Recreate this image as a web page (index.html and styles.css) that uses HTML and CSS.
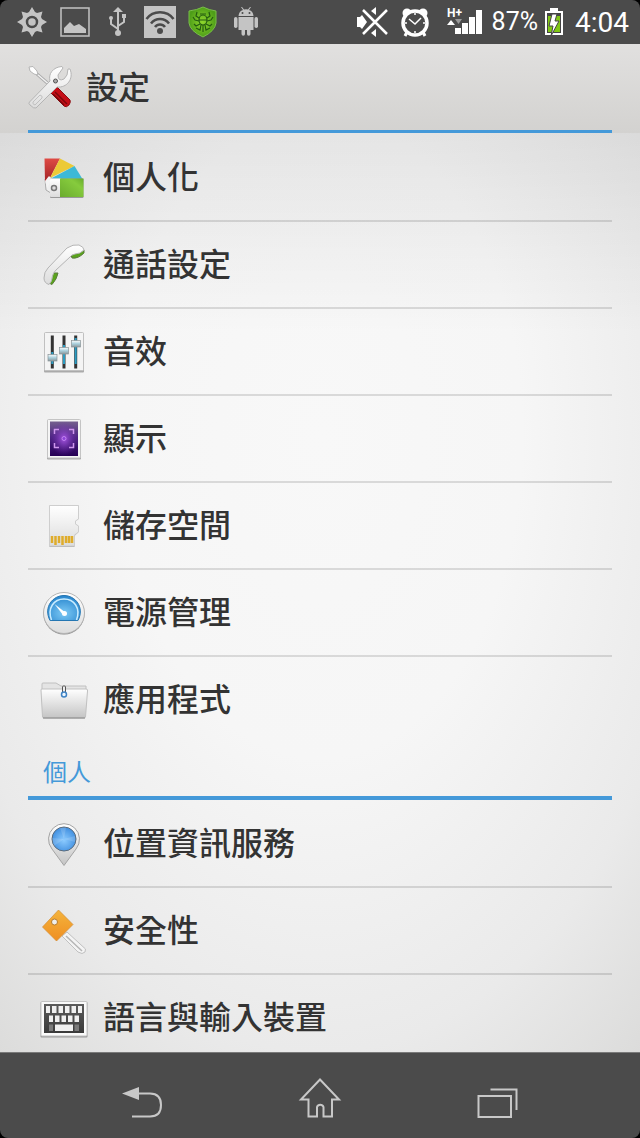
FILE: index.html
```html
<!DOCTYPE html>
<html lang="zh-Hant">
<head>
    <meta charset="UTF-8">
    <meta name="viewport" content="width=device-width, initial-scale=1.0">
    <title>設定</title>
    <link rel="stylesheet" href="styles.css">
</head>
<body>
    <!-- shared gradients -->
    <svg class="defs" width="0" height="0" aria-hidden="true">
        <defs>
            <linearGradient id="metal" x1="0" y1="0" x2="0" y2="1">
                <stop offset="0" stop-color="#ffffff"/>
                <stop offset="1" stop-color="#dcdcdc"/>
            </linearGradient>
            <linearGradient id="front" x1="0" y1="0" x2="0" y2="1">
                <stop offset="0" stop-color="#ffffff"/>
                <stop offset="1" stop-color="#c4c4c4"/>
            </linearGradient>
            <linearGradient id="red" x1="0" y1="0" x2="0" y2="1">
                <stop offset="0" stop-color="#df4b45"/>
                <stop offset="1" stop-color="#a02125"/>
            </linearGradient>
            <linearGradient id="green" x1="1" y1="0" x2="0" y2="1">
                <stop offset="0" stop-color="#68ad2c"/>
                <stop offset="0.3" stop-color="#86cb3d"/>
                <stop offset="1" stop-color="#6aab2e"/>
            </linearGradient>
            <linearGradient id="gold" x1="0" y1="0" x2="0" y2="1">
                <stop offset="0" stop-color="#f4b43c"/>
                <stop offset="1" stop-color="#ef8e22"/>
            </linearGradient>
            <linearGradient id="keys" x1="0" y1="0" x2="0" y2="1">
                <stop offset="0" stop-color="#5c5c5c"/>
                <stop offset="1" stop-color="#3a3a3a"/>
            </linearGradient>
            <linearGradient id="knob" x1="0" y1="0" x2="0" y2="1">
                <stop offset="0" stop-color="#ffffff"/>
                <stop offset="0.5" stop-color="#a8cfdc"/>
                <stop offset="1" stop-color="#8e989c"/>
            </linearGradient>
            <radialGradient id="blue" cx="0.5" cy="0.7" r="0.7">
                <stop offset="0" stop-color="#7cc9f5"/>
                <stop offset="1" stop-color="#2583cc"/>
            </radialGradient>
            <radialGradient id="pin" cx="0.5" cy="0.55" r="0.6">
                <stop offset="0" stop-color="#8ccbff"/>
                <stop offset="1" stop-color="#3888dc"/>
            </radialGradient>
            <linearGradient id="purpleBase" x1="0" y1="0" x2="0" y2="1">
                <stop offset="0" stop-color="#75608f"/>
                <stop offset="0.45" stop-color="#4d2483"/>
                <stop offset="1" stop-color="#260055"/>
            </linearGradient>
            <radialGradient id="purple">
                <stop offset="0" stop-color="#a455e0"/>
                <stop offset="1" stop-color="#6a28a8" stop-opacity="0"/>
            </radialGradient>
            <radialGradient id="shield">
                <stop offset="0" stop-color="#8ed62c"/>
                <stop offset="1" stop-color="#4e9e18"/>
            </radialGradient>
        </defs>
    </svg>

    <div class="phone">
        <div class="status-bar">
            <div class="notifications">
                <svg viewBox="0 0 32 32" fill="#c4c4c4">
                    <path d="M16 1 L19 6 Q20 6.500 21 7 L26.500 5.500 L25 11 Q25.500 12 26 13 L31 16 L26 19 Q25.500 20 25 21 L26.500 26.500 L21 25 Q20 25.500 19 26 L16 31 L13 26 Q12 25.500 11 25 L5.500 26.500 L7 21 Q6.500 20 6 19 L1 16 L6 13 Q6.500 12 7 11 L5.500 5.500 L11 7 Q12 6.500 13 6 Z"/>
                    <circle cx="16" cy="16" r="5" fill="none" stroke="#4b4b4b" stroke-width="2.500"/>
                </svg>
                <svg viewBox="0 0 32 32">
                    <rect x="2" y="2" width="28" height="28" fill="none" stroke="#c4c4c4" stroke-width="1.500"/>
                    <path d="M5 27 V22 L11 16 L15 20 L20 18 L27 23 V27 Z" fill="#c4c4c4"/>
                </svg>
                <svg viewBox="0 0 32 32" fill="none" stroke="#c4c4c4" stroke-width="2">
                    <path d="M16 4 V27 M16 23 L9 18 V12 M16 20 L22 16 V11"/>
                    <path d="M16 1 L21 6 H11 Z" fill="#c4c4c4" stroke="none"/>
                    <circle cx="16" cy="27" r="3" fill="#c4c4c4" stroke="none"/>
                    <circle cx="9" cy="12" r="2" fill="#c4c4c4" stroke="none"/>
                    <rect x="20" y="8" width="4" height="4" fill="#c4c4c4" stroke="none"/>
                </svg>
                <svg viewBox="0 0 32 32">
                    <rect width="32" height="32" fill="#c4c4c4"/>
                    <g fill="none" stroke="#4b4b4b" stroke-width="2.500">
                        <path d="M2.500 13 C9 4 23 4 29.500 13"/>
                        <path d="M7 17.500 C11.500 11.500 20.500 11.500 25 17.500"/>
                        <path d="M11 21 C13.500 17.500 18.500 17.500 21 21"/>
                    </g>
                    <circle cx="16" cy="25" r="3" fill="#4b4b4b"/>
                </svg>
                <svg viewBox="0 0 32 32">
                    <path d="M16 1 Q22 4 29 5 V17 Q28 25 16 31 Q3 25 2 17 V5 Q10 4 16 1 Z" fill="url(#shield)" stroke="#79be49"/>
                    <g fill="none" stroke="#245c10" stroke-width="1.200">
                        <ellipse cx="16" cy="14" rx="4" ry="5"/>
                        <path d="M12 12 L9 10 L10 6 M20 12 L23 10 L22 6 M12 15 L8 14 L6 11 M20 15 L24 14 L26 11 M13 18 L9 20 L7 18 M19 18 L23 20 L25 18 M14 19 L13 24 L9 22 M18 19 L19 24 L23 22 M13 8 L19 8 M12 14 H20 M16 19 V26"/>
                    </g>
                </svg>
                <svg viewBox="0 0 32 32" fill="#c4c4c4">
                    <path d="M8.500 10 Q9 5 13 4 L11 1 L12 1 L14 3.500 Q16 3 18 3.500 L20 1 L21 1 L19 4 Q23 5 23.500 10 Z"/>
                    <path d="M8.500 11 H23.500 V24 H20.500 V28 A1.500 1.500 0 0 1 17 28 V24 H15 V28 A1.500 1.500 0 0 1 11.500 28 V24 H8.500 Z"/>
                    <rect x="4" y="11" width="3.500" height="11" rx="1.700"/>
                    <rect x="24.500" y="11" width="3.500" height="11" rx="1.700"/>
                    <circle cx="12.500" cy="7" r="1" fill="#4b4b4b"/>
                    <circle cx="19.500" cy="7" r="1" fill="#4b4b4b"/>
                </svg>
            </div>
            <div class="system">
                <svg class="mute" viewBox="0 0 32 32" fill="#fff">
                    <path d="M0 11 H3 L5 9 L10 16 L5 23 L3 21 H0 Z M14 5 L19 1 V9 Z M14 27 L19 31 V23 Z"/>
                    <path d="M6 4 L30 28 M30 4 L6 28" stroke="#fff" stroke-width="2.500"/>
                </svg>
                <svg class="alarm" viewBox="0 0 28 32" fill="#fff">
                    <circle cx="6" cy="7" r="4.500"/>
                    <circle cx="22" cy="7" r="4.500"/>
                    <path d="M6 26 L4 30 M22 26 L24 30" stroke="#fff" stroke-width="3"/>
                    <circle cx="14" cy="17" r="12" fill="#4b4b4b" stroke="#fff" stroke-width="3.500"/>
                    <path d="M8 13 L14 18 L20 12 M14 7 V9 M14 25 V27 M4 17 H6 M22 17 H24" fill="none" stroke="#fff" stroke-width="1.500"/>
                </svg>
                <svg class="signal" viewBox="0 0 36 32" fill="#fff">
                    <text x="0" y="11" class="network">H+</text>
                    <path d="M0 19 L4 14 L8 19 Z"/>
                    <path d="M8 13 H15 L11.500 18 Z" fill="#999"/>
                    <path d="M8 22 H14 V28 H8 Z M15 17 H21 V28 H15 Z M22 11 H28 V28 H22 Z M29 4 H35 V28 H29 Z"/>
                </svg>
                <span class="percent">87%</span>
                <svg class="battery" viewBox="0 0 18 32">
                    <rect x="5" y="2" width="8" height="4" fill="#fff"/>
                    <rect x="1" y="6" width="16" height="22" fill="#444" stroke="#fff" stroke-width="2"/>
                    <rect x="3" y="10" width="12" height="16" fill="#80c814"/>
                    <path d="M7 8 H12 L10 15 H14 L6 30 L8 20 H4 Z" fill="#fff" stroke="#444"/>
                </svg>
                <span class="clock">4:04</span>
            </div>
        </div>

        <header class="title-bar">
            <div class="title-inner">
                <svg class="title-icon" viewBox="0 0 44 44">
                    <path d="M9 9 L24 22" stroke="#a9a9a9" stroke-width="3"/>
                    <path d="M9 9 L24 22" stroke="#f1f1f1" stroke-width="1.500"/>
                    <path d="M1 2 L5 1.500 L9 6 L10 10 L6 9 L2 6 Z" fill="#fff" stroke="#b5b5b5"/>
                    <path d="M23 28 L29 22 L42 35 Q43 37 41 40 Q38 43 36 41 Z" fill="#c50d16" stroke="#8b0c10"/>
                    <path d="M27 27 L39 39 M25 29 L36 40" stroke="#7c080c" stroke-width="1.500"/>
                    <path d="M1.500 37 L22 16 C20 9 25 2 34 1.500 L35 3 L30 10 Q30 17 36 14 Q40 11 40 4 L42 4 C46 14 39 23 29 22 L8 43 Q6 44 2 40 Q0 38 1.500 37 Z" fill="url(#metal)" stroke="#b4b4b4"/>
                    <path d="M5 37 L12 30 Q15 31 14 33 L7 40 Q4 39 5 37 Z" fill="none" stroke="#c0c0c0"/>
                    <circle cx="27.500" cy="16" r="2" fill="#aaa" stroke="#555"/>
                </svg>
                <h1>設定</h1>
            </div>
        </header>

        <main class="settings">
            <ul class="list">
                <li><a href="#personalize">
                    <svg class="icon" viewBox="0 0 48 48">
                        <path d="M5 25 L11 22 L14 41 L6 36 Z" fill="#eee" stroke="#aaa"/>
                        <path d="M4.500 4.500 H20 L10 24 L5 28 Z" fill="url(#red)"/>
                        <path d="M20 4.500 L34.500 12 L10 24 Z" fill="#ecca37"/>
                        <path d="M34.500 12 L42.500 25 H10 Z" fill="#3db9d6"/>
                        <path d="M5 27 L9 22 L12 25 L7 34 Z" fill="#f3f3f3"/>
                        <rect x="10" y="24.500" width="33.500" height="19.500" rx="1" fill="#999"/>
                        <rect x="10" y="24.500" width="11" height="18.500" rx="1" fill="url(#metal)"/>
                        <rect x="20" y="24.500" width="23.500" height="18.500" fill="url(#green)"/>
                        <circle cx="14" cy="34" r="2.500" fill="#ddd" stroke="#777" stroke-width="1.500"/>
                    </svg>
                    <span>個人化</span>
                </a></li>
                <li><a href="#call">
                    <svg class="icon" viewBox="0 0 48 48">
                        <path d="M31 14 L44 9 L44 12 Q38 18 32 17 Z" fill="#5aa31c" stroke="#5c7c40"/>
                        <path d="M11 32 L18 32 Q17 38 12 43.500 L9 42 Z" fill="#5aa31c" stroke="#5c7c40"/>
                        <path d="M27 7 Q33 3 39 4 Q44 6 44 9 Q40 13 35 13 Q31 14 30 16 L16 29 Q13 32 12.500 35 Q12 41 9 43.500 Q4 42 4 37 Q4 31 8 27 Z" fill="url(#metal)" stroke="#b4b4b4"/>
                    </svg>
                    <span>通話設定</span>
                </a></li>
                <li><a href="#sound">
                    <svg class="icon" viewBox="0 0 48 48">
                        <rect x="4" y="5" width="40" height="39.500" rx="1" fill="#aaa"/>
                        <rect x="4.500" y="4.500" width="39" height="38" rx="1" fill="#f4f4f4" stroke="#c0c0c0"/>
                        <path d="M12.300 7.500 V40.500 M24 7.500 V40.500 M35.700 7.500 V40.500" stroke="#333" stroke-width="3"/>
                        <path d="M12.300 24 V36 M24 17 V36 M35.700 10 V36" stroke="#2c9cc2" stroke-width="2"/>
                        <g fill="url(#knob)" stroke="#8a9498" stroke-width="0.700">
                            <rect x="8" y="26.500" width="9" height="6.500"/>
                            <rect x="19.500" y="19.500" width="9" height="6.500"/>
                            <rect x="31.500" y="12.500" width="9" height="6.500"/>
                        </g>
                    </svg>
                    <span>音效</span>
                </a></li>
                <li><a href="#display">
                    <svg class="icon" viewBox="0 0 48 48">
                        <rect x="7" y="5" width="34" height="39.500" rx="1" fill="#aaa"/>
                        <rect x="7.500" y="4.500" width="33" height="38.500" rx="1" fill="#f5f5f5" stroke="#c4c4c4"/>
                        <rect x="10" y="6.500" width="28" height="34.500" fill="url(#purpleBase)"/>
                        <rect x="10" y="6.500" width="28" height="34.500" fill="url(#purple)"/>
                        <path d="M14.500 19 V14.500 H19 M29 14.500 H33.500 V19 M33.500 28 V32.500 H29 M19 32.500 H14.500 V28" fill="none" stroke="#cf96ee" stroke-width="1.500"/>
                        <circle cx="24" cy="23.500" r="2" fill="#8d42d8" stroke="#c384f0"/>
                    </svg>
                    <span>顯示</span>
                </a></li>
                <li><a href="#storage">
                    <svg class="icon" viewBox="0 0 48 48">
                        <path d="M9.500 3.500 H38.500 V17 L35.500 19 V22 L38.500 24 V30 L34.500 34 V45 H9.500 Z" fill="#aaa"/>
                        <path d="M9.500 3.500 H38.500 V17 L35.500 19 V22 L38.500 24 V30 L34.500 33 V44 H9.500 Z" fill="url(#metal)" stroke="#cecece"/>
                        <path d="M12 34 V41 M15.500 34 V43 M19 34 V41 M22.500 34 V43 M26 34 V41 M29 34 V41 M32 34 V41" stroke="#dfac2b" stroke-width="2.500"/>
                    </svg>
                    <span>儲存空間</span>
                </a></li>
                <li><a href="#power">
                    <svg class="icon" viewBox="0 0 48 48">
                        <circle cx="24" cy="25" r="20.500" fill="#888"/>
                        <circle cx="24" cy="24" r="20.500" fill="url(#metal)" stroke="#b4b4b4"/>
                        <path d="M10 31.500 C3 18 13 6.500 24 6.500 C35 6.500 45 18 38 31.500 Z" fill="url(#blue)" stroke="#2476b2"/>
                        <path d="M11.500 31 C7 19 14 10 24 10 C34 10 41 19 36.500 31" fill="none" stroke="#c8ecff" stroke-width="1.500"/>
                        <path d="M14.500 15 L26 24 L23 26 Z" fill="#fff"/>
                        <circle cx="24.500" cy="24.500" r="2.500" fill="#fff"/>
                    </svg>
                    <span>電源管理</span>
                </a></li>
                <li><a href="#apps">
                    <svg class="icon" viewBox="0 0 48 48">
                        <path d="M2 14 V8 Q2 7 3 7 H16 L21 10 H46 V15 Z" fill="#e4e4e4" stroke="#c0c0c0"/>
                        <path d="M1 14 Q1 13 2 13 H46 Q48 13 47.500 15 L45.500 41 Q45 42 44 42 H4 Q3 42 2.500 41 Z" fill="url(#front)" stroke="#c0c0c0"/>
                        <path d="M3 42 H45" stroke="#858585"/>
                        <rect x="22.500" y="10" width="3" height="8" rx="1" fill="#eee" stroke="#555"/>
                        <circle cx="24" cy="18.500" r="2.500" fill="#eef7ff" stroke="#4083c4" stroke-width="1.500"/>
                    </svg>
                    <span>應用程式</span>
                </a></li>
            </ul>

            <h2 class="section-title">個人</h2>

            <ul class="list">
                <li><a href="#location">
                    <svg class="icon" viewBox="0 0 48 48">
                        <path d="M24 45.500 L12 29 A15.500 15.500 0 1 1 36 29 Z" fill="url(#front)" stroke="#a4a4a4"/>
                        <circle cx="24" cy="19" r="12" fill="url(#pin)" stroke="#5a6b7c"/>
                        <path d="M24 19 L20 8 L26 7.500 Z M24 19 L35 16 L35 22 Z M24 19 L14 26 L12 18 Z" fill="#fff" opacity="0.150"/>
                    </svg>
                    <span>位置資訊服務</span>
                </a></li>
                <li><a href="#security">
                    <svg class="icon" viewBox="0 0 48 48">
                        <path d="M22 29 L27 25 L45.500 42 L45 45 L42 46.500 L38 45 Z" fill="#f4f4f4" stroke="#c0c0c0"/>
                        <path d="M26 29 L42 44" stroke="#b5b5b5" stroke-width="1.500"/>
                        <path d="M18.500 3 L33 17.500 L16.500 34 L2.500 20 Z" fill="url(#gold)" stroke="#d28d34" stroke-width="0.700"/>
                        <circle cx="14.500" cy="15" r="3" fill="#eee" stroke="#b77b2a"/>
                    </svg>
                    <span>安全性</span>
                </a></li>
                <li><a href="#language">
                    <svg class="icon" viewBox="0 0 48 48">
                        <rect x="0.500" y="8" width="47" height="35.500" rx="1" fill="#999"/>
                        <rect x="1" y="7.500" width="46" height="34.500" rx="1" fill="#fafafa" stroke="#c4c4c4"/>
                        <rect x="4" y="10" width="40" height="29" fill="url(#keys)"/>
                        <path d="M6 12 H10 V19 H6 Z M12 12 H16.500 V19 H12 Z M18.500 12 H23 V19 H18.500 Z M25 12 H29.500 V19 H25 Z M31.500 12 H36 V19 H31.500 Z M38 12 H42 V19 H38 Z M9 21.500 H13 V28 H9 Z M15 21.500 H19.500 V28 H15 Z M21.500 21.500 H26 V28 H21.500 Z M28 21.500 H32.500 V28 H28 Z M34.500 21.500 H39 V28 H34.500 Z M15 30.500 H33 V37 H15 Z" fill="#f0f0f0"/>
                        <path d="M9 30.500 H13 V37 H9 Z M34.500 30.500 H39 V37 H34.500 Z" fill="#7a7a7a"/>
                    </svg>
                    <span>語言與輸入裝置</span>
                </a></li>
            </ul>
        </main>

        <nav class="nav-bar">
            <button type="button" aria-label="返回">
                <svg viewBox="-4 -2 48 48">
                    <path d="M1 19.500 L18 13 V26 Z" fill="#c8c8c8"/>
                    <path d="M17 19.500 H29 C37 19.500 40 24 40 31 C40 38 37 42.500 29 42.500 H11" fill="none" stroke="#c8c8c8" stroke-width="2"/>
                </svg>
            </button>
            <button type="button" aria-label="主畫面">
                <svg viewBox="-2 -2 48 48">
                    <path d="M22 5.500 L3 25.500 H10.500 V42.500 H19 V33 A3.500 3.500 0 0 1 25.500 33 V42.500 H34 V25.500 H41 Z" fill="none" stroke="#c8c8c8" stroke-width="2"/>
                </svg>
            </button>
            <button type="button" aria-label="最近使用">
                <svg viewBox="-1 -2 48 48">
                    <path d="M2.500 22 H35 V43 H2.500 Z M14.500 15.500 H40.500 V36" fill="none" stroke="#c8c8c8" stroke-width="2"/>
                </svg>
            </button>
        </nav>
    </div>
</body>
</html>
```
FILE: styles.css
```css
* {
    box-sizing: border-box;
}
body {
    margin: 0;
    background-color: #000;
    color: #333;
    font-family: "Noto Sans CJK TC", sans-serif;
}
.defs {
    position: absolute;
}
svg {
    display: block;
    flex-shrink: 0;
}
.phone {
    display: flex;
    flex-direction: column;
    height: 100vh;
    border-radius: 8px;
    overflow: hidden;
}

/* status bar */
.status-bar {
    display: flex;
    justify-content: space-between;
    align-items: center;
    height: 44px;
    padding: 0 11px 0 16px;
    background-color: #4b4b4b;
    color: #fff;
    font-family: Roboto, sans-serif;
    flex-shrink: 0;
}
.notifications {
    display: flex;
    justify-content: space-between;
    width: 246px;
}
.notifications svg {
    width: 32px;
    height: 32px;
}
.system {
    display: flex;
    align-items: center;
}
.system svg {
    height: 32px;
}
.mute {
    width: 32px;
    margin-right: 12px;
}
.alarm {
    width: 28px;
    margin-right: 18px;
}
.signal {
    width: 36px;
    margin-right: 9px;
}
.network {
    font-size: 12px;
    font-weight: 700;
}
.percent {
    font-size: 25px;
    line-height: 32px;
    margin-right: 7px;
}
.battery {
    width: 18px;
    margin-right: 12px;
}
.clock {
    font-size: 28px;
    line-height: 32px;
    padding-top: 2px;
}

/* title */
.title-bar {
    padding: 0 28px;
    background: linear-gradient(#e1e0df, #d3d2d0);
    flex-shrink: 0;
}
.title-inner {
    display: flex;
    align-items: center;
    gap: 14px;
    height: 89px;
    border-bottom: 3px solid #4499d9;
}
.title-icon {
    width: 44px;
    height: 44px;
}
h1 {
    margin: 0;
    padding-bottom: 5px;
    font-size: 32px;
    font-weight: 500;
    line-height: 48px;
}

/* list */
.settings {
    flex: 1;
    min-height: 0;
    padding: 2px 28px 0;
    overflow: hidden;
    background:
        linear-gradient(rgba(0, 0, 0, 0.07), transparent 22%),
        radial-gradient(ellipse 90% 100% at 50% 33%, #f8f8f8 0%, #f6f6f6 35%, #eaeaea 67%, #dcdcdb 87%);
}
.list {
    list-style-type: none;
    margin: 0;
    padding: 0;
}
.list li {
    border-bottom: 2px solid rgba(0, 0, 0, 0.12);
}
.list li:last-child {
    border-bottom-color: transparent;
}
.list a {
    display: flex;
    align-items: center;
    gap: 15px;
    height: 85px;
    padding: 0 12px;
    color: #333;
    font-size: 32px;
    font-weight: 500;
    line-height: 48px;
    text-decoration: none;
}
.list span {
    padding-bottom: 6px;
}
.icon {
    width: 48px;
    height: 48px;
}
.section-title {
    margin: 0 0 1px;
    padding: 9px 15px 7px;
    border-bottom: 4px solid #4499d9;
    color: #4499d9;
    font-size: 24px;
    font-weight: 400;
    line-height: 36px;
}

/* navigation */
.nav-bar {
    display: flex;
    height: 86px;
    padding: 0 8%;
    border-top: 1px solid #7a7a7a;
    background-color: #4b4b4b;
    flex-shrink: 0;
}
.nav-bar button {
    display: flex;
    flex: 1;
    justify-content: center;
    align-items: center;
    padding: 0;
    border: none;
    background: none;
    cursor: pointer;
}
.nav-bar svg {
    width: 48px;
    height: 48px;
}
```
